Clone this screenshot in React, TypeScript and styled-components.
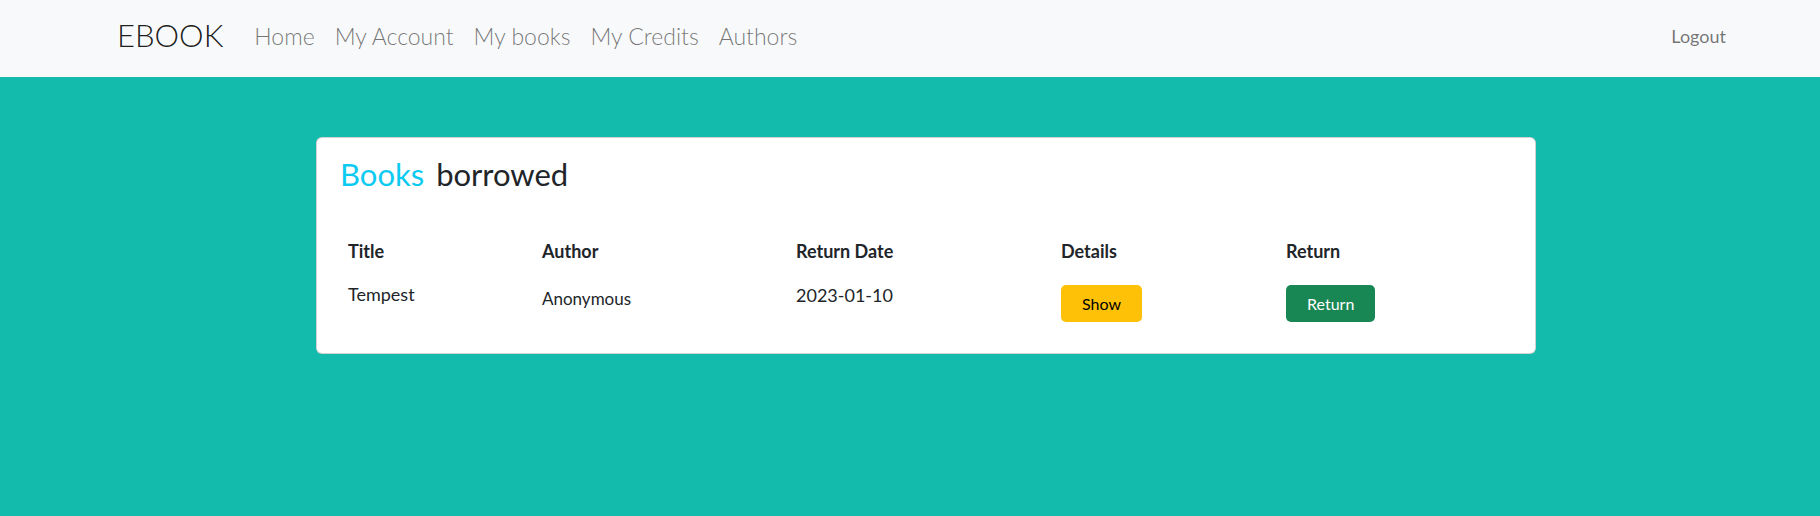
import React from 'react';
import styled, {createGlobalStyle} from "styled-components";

type BookType = {
    title: string
    author: string
    returnDate: string
}

const books: BookType[] = [
    {title: 'Tempest', author: 'Anonymous', returnDate: '2023-01-10'},
]

const navLinks = ['Home', 'My Account', 'My books', 'My Credits', 'Authors']

const App = () => {
    return (
        <>
            <GlobalStyle/>
            <Page>
                <Navbar>
                    <Brand>EBOOK</Brand>
                    <NavList>
                        {navLinks.map(l => <NavLink key={l}>{l}</NavLink>)}
                    </NavList>
                    <Logout>Logout</Logout>
                </Navbar>
                <Main>
                    <Card>
                        <Heading>
                            <Accent>Books</Accent>
                            <span>borrowed</span>
                        </Heading>
                        <Table>
                            <HeadCell>Title</HeadCell>
                            <HeadCell>Author</HeadCell>
                            <HeadCell>Return Date</HeadCell>
                            <HeadCell>Details</HeadCell>
                            <HeadCell>Return</HeadCell>
                            {books.map(b => (
                                <React.Fragment key={b.title}>
                                    <Cell offset={3}>{b.title}</Cell>
                                    <Cell offset={8} size={17}>{b.author}</Cell>
                                    <Cell offset={4}>{b.returnDate}</Cell>
                                    <Cell offset={6}><Button variant="warning">Show</Button></Cell>
                                    <Cell offset={6}><Button variant="success">Return</Button></Cell>
                                </React.Fragment>
                            ))}
                        </Table>
                    </Card>
                </Main>
            </Page>
        </>
    );
};

export default App;

const GlobalStyle = createGlobalStyle`
    * {
        box-sizing: border-box;
    }
    body {
        margin: 0;
        font-family: "Lato", "Noto Sans", sans-serif;
        color: #212529;
    }
`

const Page = styled.div`
    min-height: 516px;
    background-color: #12bbac;
    display: flex;
    flex-direction: column;
`

const Navbar = styled.nav`
    height: 77px;
    background-color: #f8f9fa;
    display: flex;
    align-items: center;
    padding: 0 94px 8px 117px;
`

const Brand = styled.div`
    font-size: 31px;
    font-weight: 300;
    color: rgba(0, 0, 0, .9);
    margin-right: 21px;
`

const NavList = styled.div`
    display: flex;
    flex: 1;
    padding-top: 2px;
`

const NavLink = styled.div`
    font-size: 23px;
    font-weight: 300;
    color: rgba(0, 0, 0, .55);
    padding: 0 10px;
`

const Logout = styled.div`
    font-size: 18px;
    color: rgba(0, 0, 0, .55);
    padding-top: 2px;
`

const Main = styled.main`
    padding: 60px 0 0 316px;
`

const Card = styled.div`
    width: 1220px;
    height: 217px;
    background: #fff;
    border: 1px solid rgba(0, 0, 0, .175);
    border-radius: 6px;
    padding: 16px 23px;
`

const Heading = styled.h2`
    margin: 0;
    font-size: 31px;
    font-weight: 400;
    line-height: 40px;
    display: flex;
    gap: 12px;
`

const Accent = styled.span`
    color: #0dcaf0;
`

const Table = styled.div`
    margin-top: 45px;
    display: grid;
    grid-template-columns: 194px 254px 265px 225px 1fr;
    align-items: start;
`

const HeadCell = styled.div`
    font-size: 18px;
    font-weight: 700;
    line-height: 24px;
    padding: 0 8px 6px;
`

const Cell = styled.div<{offset: number, size?: number}>`
    font-size: ${p => p.size || 18}px;
    line-height: 24px;
    padding: ${p => p.offset + 10}px 8px 8px;
`

const Button = styled.button<{variant: 'warning' | 'success'}>`
    font-family: inherit;
    font-size: 16px;
    height: 37px;
    padding: 0 21px;
    border: none;
    border-radius: 5px;
    background-color: ${p => p.variant === 'warning' ? '#ffc107' : '#198754'};
    color: ${p => p.variant === 'warning' ? '#000' : '#fff'};
`
